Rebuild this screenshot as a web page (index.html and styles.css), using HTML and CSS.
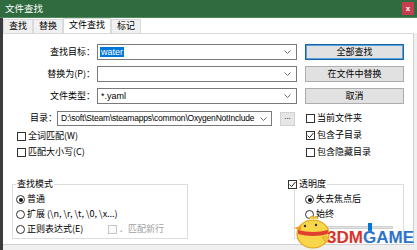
FILE: index.html
```html
<!DOCTYPE html>
<html lang="zh-CN">
<head>
<meta charset="utf-8">
<link rel="stylesheet" href="styles.css">
</head>
<body>
<div class="window">
  <div class="titlebar">
    <span class="title">文件查找</span>
    <span class="close">x</span>
  </div>
  <div class="frame">
    <div class="tabs">
      <span class="tab">查找</span>
      <span class="tab">替换</span>
      <span class="tab active">文件查找</span>
      <span class="tab">标记</span>
    </div>
    <div class="panel">
      <div class="main">
        <div class="left">
          <div class="field-row">
            <label class="field-label">查找目标：</label>
            <div class="combo"><span class="sel">water</span><svg class="arrow" width="7" height="4" viewBox="0 0 7 4"><polyline points="0.5,0.5 3.5,3.5 6.5,0.5" fill="none" stroke="#6d6d6d"/></svg></div>
          </div>
          <div class="field-row">
            <label class="field-label">替换为(P)：</label>
            <div class="combo"><span></span><svg class="arrow" width="7" height="4" viewBox="0 0 7 4"><polyline points="0.5,0.5 3.5,3.5 6.5,0.5" fill="none" stroke="#6d6d6d"/></svg></div>
          </div>
          <div class="field-row last">
            <label class="field-label">文件类型：</label>
            <div class="combo"><span class="val">*.yaml</span><svg class="arrow" width="7" height="4" viewBox="0 0 7 4"><polyline points="0.5,0.5 3.5,3.5 6.5,0.5" fill="none" stroke="#6d6d6d"/></svg></div>
          </div>
          <div class="dir-row">
            <label class="dir-label">目录：</label>
            <div class="combo dir"><span class="val">D:\soft\Steam\steamapps\common\OxygenNotInclude</span><svg class="arrow" width="7" height="4" viewBox="0 0 7 4"><polyline points="0.5,0.5 3.5,3.5 6.5,0.5" fill="none" stroke="#6d6d6d"/></svg></div>
            <button class="dots">...</button>
          </div>
          <div class="checks left-checks">
            <div class="check"><span class="box"></span>全词匹配(W)</div>
            <div class="check"><span class="box"></span>匹配大小写(C)</div>
          </div>
        </div>
        <div class="right">
          <button class="btn default">全部查找</button>
          <button class="btn">在文件中替换</button>
          <button class="btn">取消</button>
          <div class="checks right-checks">
            <div class="check"><span class="box"></span>当前文件夹</div>
            <div class="check"><span class="box"><svg width="7" height="7" viewBox="0 0 7 7"><polyline points="0.6,3.6 2.6,5.6 6.4,1" fill="none" stroke="#222" stroke-width="1"/></svg></span>包含子目录</div>
            <div class="check"><span class="box"></span>包含隐藏目录</div>
          </div>
        </div>
      </div>
      <div class="groups">
        <fieldset class="group mode">
          <legend>查找模式</legend>
          <div class="radio-row first"><span class="radio on"></span>普通</div>
          <div class="radio-row"><span class="radio"></span>扩展 (\n, \r, \t, \0, \x...)</div>
          <div class="radio-row">
            <span class="radio"></span><span class="regex">正则表达式(E)</span>
            <span class="box off"></span><span class="muted">．匹配新行</span>
          </div>
        </fieldset>
        <fieldset class="group opacity">
          <legend><span class="box"><svg width="7" height="7" viewBox="0 0 7 7"><polyline points="0.6,3.6 2.6,5.6 6.4,1" fill="none" stroke="#222" stroke-width="1"/></svg></span>透明度</legend>
          <div class="radio-row first"><span class="radio on"></span>失去焦点后</div>
          <div class="radio-row"><span class="radio"></span>始终</div>
          <div class="slider"><span class="thumb"></span></div>
        </fieldset>
      </div>
    </div>
  </div>
  <div class="watermark">
    <svg class="bird" width="42" height="36" viewBox="0 0 42 36">
      <path d="M17 6 q2 -5 5 -1 q2 -4 4 1" fill="#f7d64a" stroke="#e0a020" stroke-width="1"/>
      <ellipse cx="21" cy="21" rx="16" ry="14" fill="#f7d64a" stroke="#e3a31f" stroke-width="1.2"/>
      <path d="M6 17 q15 4 30 0 l0 4 q-15 4 -30 0 z" fill="#e2402e"/>
      <path d="M2 15 l7 -2 l0 5 z" fill="#f29a1c"/>
      <circle cx="13" cy="13" r="1.2" fill="#333"/>
      <circle cx="24" cy="12" r="1.2" fill="#333"/>
      <path d="M30 24 q8 -2 7 6 q-5 -1 -7 -6 z" fill="#f1c43a" stroke="#e3a31f" stroke-width="0.8"/>
    </svg>
    <span class="wm-text"><span class="red">3DM</span><span class="blue">GAME</span></span>
  </div>
</div>
</body>
</html>
```

FILE: styles.css
```css
* {
  box-sizing: border-box;
}

body {
  margin: 0;
  width: 417px;
  height: 250px;
  overflow: hidden;
  font-family: "Noto Sans CJK SC", "Noto Sans", sans-serif;
  font-size: 9px;
  line-height: 1.2;
  color: #000;
  background: #fff;
}

.window {
  position: relative;
  height: 250px;
  display: flex;
  flex-direction: column;
}

.titlebar {
  height: 18px;
  background: #2f6b3e;
  border-bottom: 1px solid #4e8a5c;
  color: #fff;
  display: flex;
  align-items: center;
  justify-content: space-between;
  padding: 0 3px 0 5px;
  font-size: 9.5px;
}

.close {
  width: 12px;
  height: 13px;
  background: #c43f4e;
  color: #fff;
  font-family: "Liberation Sans", sans-serif;
  font-size: 8px;
  font-weight: bold;
  display: flex;
  align-items: center;
  justify-content: center;
}

.frame {
  flex: 1;
  display: flex;
  flex-direction: column;
  border-left: 3px solid #3b3b3b;
  background: #f0f0f0;
  padding-bottom: 5px;
}

.tabs {
  height: 15px;
  display: flex;
  align-items: flex-end;
  background: #fff;
}

.tab {
  height: 14px;
  padding: 0 5px;
  border: 1px solid #dadada;
  border-bottom: none;
  background: #f0f0f0;
  display: flex;
  align-items: center;
  justify-content: center;
}

.tab.active {
  height: 15px;
  background: #fff;
  padding-bottom: 2px;
}

.panel {
  flex: 1;
  background: #fff;
  border-top: 1px solid #d9d9d9;
  border-right: 1px solid #d0d0d0;
  border-bottom: 1px solid #d0d0d0;
  margin-right: 3px;
  padding-top: 10px;
}

.main {
  display: grid;
  grid-template-columns: 294px 99px;
  column-gap: 8px;
}

.field-row {
  display: flex;
  align-items: center;
  height: 16px;
  margin-bottom: 6px;
}

.field-row.last {
  margin-bottom: 7px;
}

.field-label {
  width: 92px;
  margin-right: 2px;
  text-align: right;
}

.combo {
  width: 200px;
  height: 16px;
  border: 1px solid #7a7a7a;
  background: #fff;
  display: flex;
  align-items: center;
  justify-content: space-between;
  padding: 0 5px 0 2px;
  white-space: nowrap;
}

.combo .arrow {
  flex: none;
}

.combo .val {
  padding-left: 1px;
  font-family: "Liberation Sans", sans-serif;
}

.sel {
  background: #0078d7;
  color: #fff;
  padding: 0 1px;
  font-family: "Liberation Sans", sans-serif;
}

.dir-row {
  display: flex;
  align-items: center;
  height: 15px;
}

.dir-label {
  width: 54px;
  text-align: right;
}

.combo.dir {
  width: 215px;
  height: 15px;
  padding-right: 4px;
}

.combo.dir .val {
  font-size: 8.5px;
  letter-spacing: -0.2px;
}

.dots {
  width: 15px;
  height: 14px;
  margin-left: 8px;
  border: 1px solid #d2d2d2;
  background: #e6e6e6;
  font-family: "Liberation Sans", sans-serif;
  font-size: 8px;
  padding: 0 0 3px;
  line-height: 1;
}

.checks {
  display: flex;
  flex-direction: column;
}

.left-checks {
  padding-left: 14px;
  margin-top: 2px;
}

.check {
  display: flex;
  align-items: center;
  height: 16px;
  gap: 2px;
}

.right-checks .check {
  height: 17px;
  padding-left: 1px;
}

.box {
  width: 9px;
  height: 9px;
  border: 1px solid #333;
  background: #fff;
  display: inline-flex;
  align-items: center;
  justify-content: center;
  flex: none;
}

.box.off {
  border-color: #c6c6c6;
  background: #fafafa;
}

.btn {
  display: block;
  width: 99px;
  height: 16px;
  margin-bottom: 6px;
  padding: 0;
  border: 1px solid #adadad;
  background: #e1e1e1;
  font: inherit;
  color: #000;
}

.btn.default {
  border-color: #1765a8;
  box-shadow: inset 0 0 0 1px #5aa0dc;
}

.groups {
  display: flex;
  margin-top: 17px;
}

.group {
  margin: 0;
  padding: 0 0 1px 3px;
  border: 1px solid #dcdcdc;
  min-width: 0;
}

.group legend {
  padding: 0 1px;
  height: 12px;
  line-height: 12px;
}

.mode {
  margin-left: 9px;
  width: 176px;
}

.opacity {
  margin-left: 106px;
  width: 110px;
  padding-left: 10px;
}

.opacity legend {
  margin-left: -18px;
  display: flex;
  align-items: center;
  gap: 2px;
  background: #fff;
}

.radio-row {
  display: flex;
  align-items: center;
  height: 15px;
  gap: 2px;
  white-space: nowrap;
}

.radio-row.first {
  margin-top: 2px;
}

.radio {
  width: 9px;
  height: 9px;
  border: 1px solid #333;
  border-radius: 50%;
  background: #fff;
  display: inline-flex;
  align-items: center;
  justify-content: center;
  flex: none;
}

.radio.on::after {
  content: "";
  width: 4px;
  height: 4px;
  border-radius: 50%;
  background: #111;
}

.regex {
  width: 79px;
}

.muted {
  color: #a0a0a0;
}

.slider {
  position: relative;
  margin: 4px 0 0 22px;
  width: 66px;
  height: 3px;
  background: #e2e2e2;
  border: 1px solid #d0d0d0;
}

.thumb {
  position: absolute;
  left: 40px;
  top: -4px;
  width: 4px;
  height: 9px;
  background: #0078d7;
}

.watermark {
  position: absolute;
  right: 3px;
  bottom: 1px;
  display: flex;
  align-items: flex-end;
}

.bird {
  margin-right: -7px;
  display: block;
}

.wm-text {
  font-family: "Liberation Sans", sans-serif;
  font-weight: bold;
  font-size: 17px;
  line-height: 17px;
  margin-bottom: 3px;
  text-shadow: 0 0 1px #fff;
}

.red {
  color: #d9342b;
}

.blue {
  color: #2c74c9;
}
```
